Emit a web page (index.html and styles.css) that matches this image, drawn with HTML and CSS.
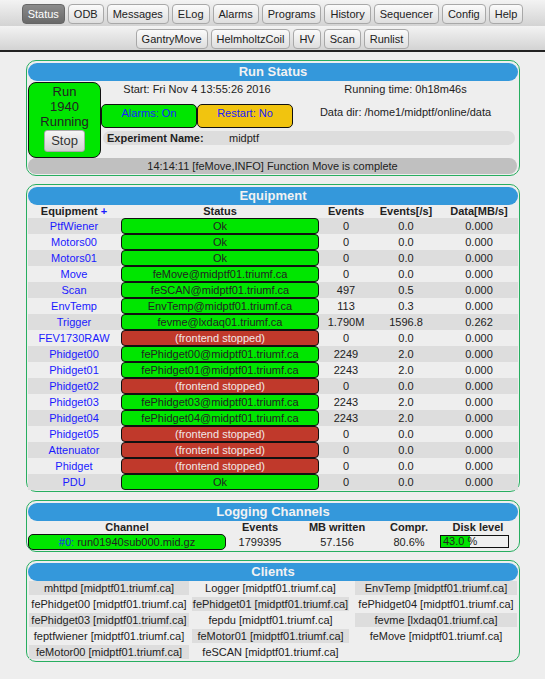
FILE: index.html
```html
<!DOCTYPE html>
<html>
<head>
<meta charset="utf-8">
<link rel="stylesheet" href="styles.css">
</head>
<body>
<div class="nav">
  <div class="navrow">
    <span class="nb sel">Status</span><span class="nb">ODB</span><span class="nb">Messages</span><span class="nb">ELog</span><span class="nb">Alarms</span><span class="nb">Programs</span><span class="nb">History</span><span class="nb">Sequencer</span><span class="nb">Config</span><span class="nb">Help</span>
  </div>
  <div class="navrow">
    <span class="nb">GantryMove</span><span class="nb">HelmholtzCoil</span><span class="nb">HV</span><span class="nb">Scan</span><span class="nb">Runlist</span>
  </div>
</div>

<div class="main">
  <div class="box">
    <div class="hdr">Run Status</div>
    <div class="rungrid">
      <div class="runbox">
        <div>Run</div><div>1940</div><div>Running</div>
        <span class="stop">Stop</span>
      </div>
      <div class="start">Start: Fri Nov 4 13:55:26 2016</div>
      <div class="rtime">Running time: 0h18m46s</div>
      <div class="flag green">Alarms: On</div>
      <div class="flag yellow">Restart: No</div>
      <div class="ddir">Data dir: /home1/midptf/online/data</div>
      <div class="expbar"><span class="explabel">Experiment Name:</span><span>midptf</span></div>
      <div class="msg">14:14:11 [feMove,INFO] Function Move is complete</div>
    </div>
  </div>

  <div class="box">
    <div class="hdr">Equipment</div>
    <div class="erow ehead"><div>Equipment <span class="plus">+</span></div><div>Status</div><div>Events</div><div>Events[/s]</div><div>Data[MB/s]</div></div>
    <div class="erow"><div class="ename">PtfWiener</div><div class="st ok">Ok</div><div>0</div><div>0.0</div><div>0.000</div></div>
    <div class="erow"><div class="ename">Motors00</div><div class="st ok">Ok</div><div>0</div><div>0.0</div><div>0.000</div></div>
    <div class="erow"><div class="ename">Motors01</div><div class="st ok">Ok</div><div>0</div><div>0.0</div><div>0.000</div></div>
    <div class="erow"><div class="ename">Move</div><div class="st ok">feMove@midptf01.triumf.ca</div><div>0</div><div>0.0</div><div>0.000</div></div>
    <div class="erow"><div class="ename">Scan</div><div class="st ok">feSCAN@midptf01.triumf.ca</div><div>497</div><div>0.5</div><div>0.000</div></div>
    <div class="erow"><div class="ename">EnvTemp</div><div class="st ok">EnvTemp@midptf01.triumf.ca</div><div>113</div><div>0.3</div><div>0.000</div></div>
    <div class="erow"><div class="ename">Trigger</div><div class="st ok">fevme@lxdaq01.triumf.ca</div><div>1.790M</div><div>1596.8</div><div>0.262</div></div>
    <div class="erow"><div class="ename">FEV1730RAW</div><div class="st bad">(frontend stopped)</div><div>0</div><div>0.0</div><div>0.000</div></div>
    <div class="erow"><div class="ename">Phidget00</div><div class="st ok">fePhidget00@midptf01.triumf.ca</div><div>2249</div><div>2.0</div><div>0.000</div></div>
    <div class="erow"><div class="ename">Phidget01</div><div class="st ok">fePhidget01@midptf01.triumf.ca</div><div>2243</div><div>2.0</div><div>0.000</div></div>
    <div class="erow"><div class="ename">Phidget02</div><div class="st bad">(frontend stopped)</div><div>0</div><div>0.0</div><div>0.000</div></div>
    <div class="erow"><div class="ename">Phidget03</div><div class="st ok">fePhidget03@midptf01.triumf.ca</div><div>2243</div><div>2.0</div><div>0.000</div></div>
    <div class="erow"><div class="ename">Phidget04</div><div class="st ok">fePhidget04@midptf01.triumf.ca</div><div>2243</div><div>2.0</div><div>0.000</div></div>
    <div class="erow"><div class="ename">Phidget05</div><div class="st bad">(frontend stopped)</div><div>0</div><div>0.0</div><div>0.000</div></div>
    <div class="erow"><div class="ename">Attenuator</div><div class="st bad">(frontend stopped)</div><div>0</div><div>0.0</div><div>0.000</div></div>
    <div class="erow"><div class="ename">Phidget</div><div class="st bad">(frontend stopped)</div><div>0</div><div>0.0</div><div>0.000</div></div>
    <div class="erow"><div class="ename">PDU</div><div class="st ok">Ok</div><div>0</div><div>0.0</div><div>0.000</div></div>
  </div>

  <div class="box">
    <div class="hdr">Logging Channels</div>
    <div class="lrow lhead"><div>Channel</div><div>Events</div><div>MB written</div><div>Compr.</div><div>Disk level</div></div>
    <div class="lrow"><div class="chan"><span class="plus">#0:</span> run01940sub000.mid.gz</div><div>1799395</div><div>57.156</div><div>80.6%</div><div class="diskcell"><div class="disk"><div class="diskfill" style="width:43%"></div><span class="disktxt">43.0 %</span></div></div></div>
  </div>

  <div class="box">
    <div class="hdr">Clients</div>
    <div class="cgrid">
      <div class="cl g">mhttpd [midptf01.triumf.ca]</div>
      <div class="cl">Logger [midptf01.triumf.ca]</div>
      <div class="cl g">EnvTemp [midptf01.triumf.ca]</div>
      <div class="cl">fePhidget00 [midptf01.triumf.ca]</div>
      <div class="cl g">fePhidget01 [midptf01.triumf.ca]</div>
      <div class="cl">fePhidget04 [midptf01.triumf.ca]</div>
      <div class="cl g">fePhidget03 [midptf01.triumf.ca]</div>
      <div class="cl">fepdu [midptf01.triumf.ca]</div>
      <div class="cl g">fevme [lxdaq01.triumf.ca]</div>
      <div class="cl">feptfwiener [midptf01.triumf.ca]</div>
      <div class="cl g">feMotor01 [midptf01.triumf.ca]</div>
      <div class="cl">feMove [midptf01.triumf.ca]</div>
      <div class="cl g">feMotor00 [midptf01.triumf.ca]</div>
      <div class="cl">feSCAN [midptf01.triumf.ca]</div>
    </div>
  </div>
</div>
</body>
</html>
```

FILE: styles.css
```css
html, body {
  margin: 0;
  padding: 0;
  background: #eeeeee;
  font-family: "Liberation Sans", Arial, sans-serif;
  font-size: 11px;
  color: #222;
}

.nav {
  border-bottom: 2px solid #222;
}
.navrow {
  height: 26px;
  display: flex;
  justify-content: center;
  align-items: flex-start;
  gap: 3px;
  padding-top: 4px;
  box-sizing: border-box;
  background: linear-gradient(#f3f3f3, #d3d3d3);
}
.navrow + .navrow {
  height: 24px;
  padding-top: 3px;
}
.nb {
  display: inline-block;
  height: 20px;
  line-height: 18px;
  box-sizing: border-box;
  padding: 0 5px;
  border: 1px solid #a8a8a8;
  border-radius: 4px;
  background: linear-gradient(#fbfbfb, #dedede);
  color: #222;
  font-size: 11px;
}
.nb.sel {
  background: linear-gradient(#8a8a8a, #6a6a6a);
  border-color: #666;
  color: #fff;
}

.main {
  padding: 8px 0 20px 26px;
  display: flex;
  flex-direction: column;
  gap: 8px;
}
.box {
  width: 494px;
  box-sizing: border-box;
  border: 1px solid #27ae60;
  border-radius: 10px;
  padding: 2px 1px 1px 1px;
}
.hdr {
  height: 18px;
  line-height: 18px;
  background: #3498db;
  border-radius: 9px;
  color: #f2f2f2;
  font-weight: bold;
  font-size: 13px;
  text-align: center;
}

.rungrid {
  margin-top: 1px;
  display: grid;
  grid-template-columns: 73px 96px 96px 1fr;
  grid-template-rows: 22px 24px 30px 16px;
}
.runbox {
  grid-row: 1 / 4;
  grid-column: 1;
  background: #00e600;
  border: 1px solid #111;
  border-radius: 8px;
  box-sizing: border-box;
  text-align: center;
  font-size: 13px;
  line-height: 15px;
  padding-top: 1px;
}
.stop {
  display: inline-block;
  margin-top: 1px;
  width: 41px;
  height: 22px;
  line-height: 20px;
  box-sizing: border-box;
  border: 1px solid #aaa;
  border-radius: 3px;
  background: linear-gradient(#f6f6f6, #d0d0d0);
  font-size: 13px;
  color: #333;
}
.start {
  grid-row: 1;
  grid-column: 2 / 4;
  text-align: center;
  line-height: 14px;
}
.rtime {
  grid-row: 1;
  grid-column: 4;
  text-align: center;
  line-height: 14px;
}
.flag {
  grid-row: 2;
  border: 1px solid #111;
  border-radius: 5px;
  box-sizing: border-box;
  text-align: center;
  line-height: 14px;
  padding-top: 1px;
  color: #1a1aff;
}
.flag.green { grid-column: 2; background: #00e600; }
.flag.yellow { grid-column: 3; background: #f1c40f; }
.ddir {
  grid-row: 2;
  grid-column: 4;
  text-align: center;
  line-height: 14px;
  padding-top: 1px;
}
.expbar {
  grid-row: 3;
  grid-column: 2 / 5;
  margin: 3px 3px 0 2px;
  height: 14px;
  line-height: 14px;
  background: #dddddd;
  border-radius: 7px;
  display: flex;
  padding-left: 4px;
}
.explabel {
  font-weight: bold;
  width: 122px;
}
.msg {
  grid-row: 4;
  grid-column: 1 / 5;
  background: #c0c0c0;
  border-radius: 8px;
  text-align: center;
  line-height: 16px;
  margin-right: 1px;
}

.erow {
  display: grid;
  grid-template-columns: 92px 200px 52px 68px 1fr;
  height: 16px;
  line-height: 16px;
  text-align: center;
}
.erow:nth-child(odd) { background: #dddddd; }
.erow.ehead {
  background: none;
  height: 13px;
  line-height: 13px;
  font-weight: bold;
}
.plus { color: #1a1aff; }
.ename { color: #1a1aff; }
.st {
  margin: 0 1px;
  border: 1px solid #111;
  border-radius: 4px;
  box-sizing: border-box;
  line-height: 14px;
}
.st.ok { background: #00e600; color: #222; }
.st.bad { background: #c0392b; color: #f0e8e8; }

.lrow {
  display: grid;
  grid-template-columns: 198px 68px 86px 58px 1fr;
  height: 16px;
  line-height: 16px;
  text-align: center;
}
.lrow.lhead {
  height: 13px;
  line-height: 13px;
  font-weight: bold;
}
.chan {
  background: #00e600;
  border: 1px solid #111;
  border-radius: 5px;
  box-sizing: border-box;
  line-height: 14px;
}
.diskcell {
  text-align: left;
  padding-left: 2px;
  padding-top: 1px;
}
.disk {
  position: relative;
  width: 69px;
  height: 13px;
  box-sizing: border-box;
  border: 1px solid #111;
  background: #f0f0f0;
}
.diskfill {
  height: 100%;
  background: #00e600;
}
.disktxt {
  position: absolute;
  left: 2px;
  top: 0;
  line-height: 11px;
}

.cgrid {
  display: grid;
  grid-template-columns: 160px 160px 162px;
  column-gap: 3px;
  row-gap: 2px;
  grid-auto-rows: 14px;
  margin: 0 0 1px 1px;
}
.cl {
  line-height: 14px;
  text-align: center;
  white-space: nowrap;
}
.cl:nth-child(3n+2) { width: 157px; }
.cl.g { background: #dddddd; }
```
